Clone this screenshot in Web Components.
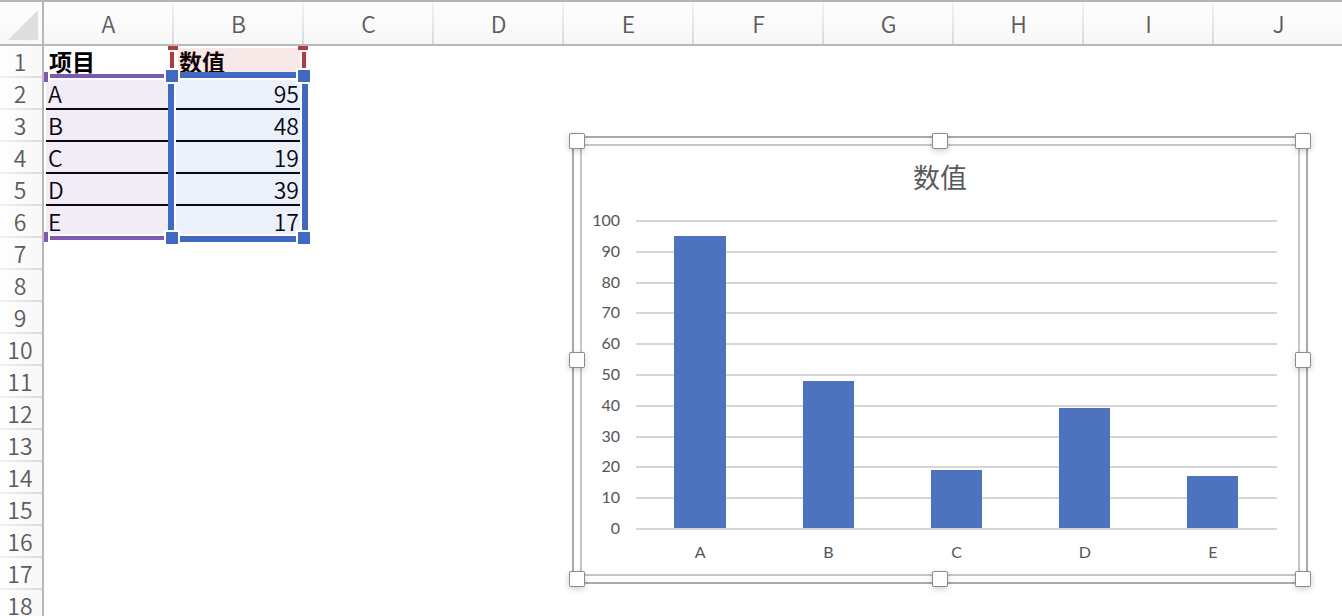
<!DOCTYPE html>
<html lang="zh-CN">
<head>
<meta charset="utf-8">
<title>数值</title>
<style>
  body { margin: 0; background: #fff; height: 100vh; overflow: hidden; position: relative;
         font-family: "Noto Sans CJK SC", "Noto Sans", sans-serif; }
  range-outline, chart-frame { position: absolute; }
  .header-range { left: 168px; top: 46px; width: 140px; height: 26px; }
  .label-range { left: 44px; top: 72px; width: 124px; height: 172px; }
  .value-range { left: 166px; top: 70px; width: 144px; height: 174px; }
  chart-frame { left: 572px; top: 136px; width: 736px; height: 448px; }
</style>
</head>
<body>
<sheet-grid columns="10" rows="18"></sheet-grid>
<range-outline class="header-range" kind="header"></range-outline>
<range-outline class="label-range" kind="labels"></range-outline>
<range-outline class="value-range" kind="values"></range-outline>
<chart-frame><bar-chart max="100" step="10"><span slot="title">数值</span></bar-chart></chart-frame>

<script>
const data = [['A', 95], ['B', 48], ['C', 19], ['D', 39], ['E', 17]];

class SheetGrid extends HTMLElement {
  connectedCallback() {
    const cols = +this.getAttribute('columns'), rows = +this.getAttribute('rows');
    const cells = [['项目', '数值'], ...data];
    let head = '<th class="corner"><svg width="30" height="30" aria-hidden="true"><path d="M30 0V30H0Z" fill="#dedede"/></svg></th>';
    for (let c = 0; c < cols; c++) head += `<th scope="col">${String.fromCharCode(65 + c)}</th>`;
    let body = '';
    for (let r = 0; r < rows; r++) {
      body += `<tr><th scope="row">${r + 1}</th>`;
      for (let c = 0; c < cols; c++) {
        const v = cells[r] && cells[r][c] !== undefined ? cells[r][c] : '';
        const cls = v === '' ? '' : r === 0 ? 'title' : (c ? 'number' : 'label') + (r < data.length ? ' ruled' : '');
        body += `<td class="${cls}">${v}</td>`;
      }
      body += '</tr>';
    }
    this.attachShadow({ mode: 'open' }).innerHTML = `
      <style>
        :host { display: block; height: 100%; overflow: hidden; }
        table { table-layout: fixed; width: ${44 + 130 * cols}px; border-spacing: 0; border-top: 2px solid #b4b4b4;
                font-size: 23px; line-height: 30px; font-weight: 350; }
        col.index { width: 44px; }
        th, td { padding: 0; box-sizing: border-box; height: 32px; }
        th { font-weight: 350; color: #5c5c5c; }
        thead th { height: 44px; line-height: 42px; border-bottom: 2px solid #b8b8b8; padding-right: 1px;
                   background: linear-gradient(#f4f4f4, #dadada) right / 2px 100% no-repeat, linear-gradient(#fefefe, #f7f7f7); }
        thead .corner { border-right: 2px solid #b8b8b8; background: linear-gradient(#fdfdfd, #f8f8f8); padding: 0 4px 4px 0;
                        text-align: right; vertical-align: bottom; }
        svg { display: block; margin-left: auto; }
        tbody th { border-right: 2px solid #b8b8b8; padding: 0 2px 2px 0;
                   background: linear-gradient(90deg, #f4f4f4, #dadada) bottom / 100% 2px no-repeat, linear-gradient(90deg, #fefefe, #f8f8f8); }
        td { padding: 0 5px 2px; color: #000; white-space: nowrap; }
        .title { font-weight: 700; }
        .label { text-align: left; padding-left: 4px; }
        .number { text-align: right; }
        .ruled { background: linear-gradient(#000, #000) 2px 100% / 100% 2px no-repeat; }
      </style>
      <table><colgroup><col class="index"><col span="${cols}"></colgroup>
        <thead><tr>${head}</tr></thead><tbody>${body}</tbody></table>`;
  }
}

const outlines = {
  header: `
    .fill { left: 10px; right: 8px; top: 2px; bottom: 0; background: rgba(190, 40, 40, .1); }
    .tab { width: 10px; height: 4px; top: 0; background: #b03c3f; }
    .side { width: 4px; top: 6px; bottom: 4px; background: #b03c3f; }
    .tab.a { left: 0; } .tab.b { right: 0; }
    .side.a { left: 2px; } .side.b { right: 2px; }`,
  labels: `
    .fill { left: 2px; right: 0; top: 8px; bottom: 10px; background: rgba(120, 80, 160, .1); }
    .line { left: 6px; right: 0; height: 4px; background: #7d5ab0; }
    .line.a { top: 2px; } .line.b { bottom: 4px; }
    .knob { left: 0; width: 4px; height: 10px; background: #7d5ab0; box-shadow: 2px 0 #fff; }
    .knob.a { top: 0; } .knob.b { bottom: 2px; }`,
  values: `
    .fill { left: 2px; right: 2px; top: 2px; bottom: 2px; border: 6px solid #4169c1; background: rgba(60, 110, 210, .1);
            box-shadow: inset 0 0 0 2px #fff; }
    .knob { width: 12px; height: 12px; background: #4169c1; box-shadow: 0 0 0 2px #fff; }
    .a { left: 0; top: 0; } .b { right: 0; top: 0; } .c { left: 0; bottom: 0; } .d { right: 0; bottom: 0; }`
};
const outlineParts = {
  header: ['fill', 'tab a', 'tab b', 'side a', 'side b'],
  labels: ['fill', 'line a', 'line b', 'knob a', 'knob b'],
  values: ['fill', 'knob a', 'knob b', 'knob c', 'knob d']
};

class RangeOutline extends HTMLElement {
  connectedCallback() {
    const kind = this.getAttribute('kind');
    this.attachShadow({ mode: 'open' }).innerHTML = `
      <style>
        :host { display: block; pointer-events: none; }
        i { position: absolute; box-sizing: border-box; }
        ${outlines[kind]}
      </style>${outlineParts[kind].map(p => `<i class="${p}"></i>`).join('')}`;
  }
}

class ChartFrame extends HTMLElement {
  connectedCallback() {
    const spots = [[0, 0], [50, 0], [100, 0], [0, 50], [100, 50], [0, 100], [50, 100], [100, 100]];
    this.attachShadow({ mode: 'open' }).innerHTML = `
      <style>
        :host { display: block; box-sizing: border-box; border: 2px solid #a9a9a9; background: #fff; padding: 6px; }
        .inner { box-sizing: border-box; height: 100%; border: 2px solid #c6c6c6; }
        .handles { position: absolute; inset: 3px; }
        .handles i { position: absolute; width: 14px; height: 14px; margin: -7px; background: #fff; border-radius: 1px;
                     box-shadow: 0 0 0 1px #8c8c8c, 0 2px 6px 1px rgba(0, 0, 0, .2); }
      </style>
      <div class="inner"><slot></slot></div>
      <div class="handles">${spots.map(([x, y]) => `<i style="left:${x}%;top:${y}%"></i>`).join('')}</div>`;
  }
}

class BarChart extends HTMLElement {
  connectedCallback() {
    const max = +this.getAttribute('max'), step = +this.getAttribute('step');
    const ticks = [];
    for (let t = max; t >= 0; t -= step) ticks.push(t);
    this.attachShadow({ mode: 'open' }).innerHTML = `
      <style>
        :host { display: grid; grid-template: 65px 326px auto / 38px 1fr; column-gap: 16px; padding-right: 21px;
                font: 16px/18px Lato, sans-serif; color: #555; }
        h2 { grid-column: 1 / -1; margin: 0 -21px 0 0; padding-top: 11px; text-align: center;
             font: 400 27px/40px "Noto Sans CJK SC", sans-serif; color: #595959; }
        .scale { display: flex; flex-direction: column; justify-content: space-between; text-align: right; }
        .plot { display: grid; margin: 9px 0 7px; }
        .lines, .bars { grid-area: 1 / 1; display: flex; }
        .lines { flex-direction: column; justify-content: space-between; }
        .lines i { height: 2px; background: #d6d6d6; }
        .bars { align-items: flex-end; justify-content: space-around; margin: 1px 0 2px; }
        .bars i { width: 8%; background: #4d72be; }
        .names { grid-column: 2; display: flex; padding-top: 6px; }
        .names span { flex: 1; text-align: center; }
      </style>
      <h2><slot name="title"></slot></h2>
      <div class="scale">${ticks.map(t => `<span>${t}</span>`).join('')}</div>
      <div class="plot">
        <div class="lines">${ticks.map(() => '<i></i>').join('')}</div>
        <div class="bars">${data.map(([, v]) => `<i style="height:${v / max * 100}%"></i>`).join('')}</div>
      </div>
      <div class="names">${data.map(([n]) => `<span>${n}</span>`).join('')}</div>`;
  }
}

customElements.define('sheet-grid', SheetGrid);
customElements.define('range-outline', RangeOutline);
customElements.define('chart-frame', ChartFrame);
customElements.define('bar-chart', BarChart);
</script>
</body>
</html>
